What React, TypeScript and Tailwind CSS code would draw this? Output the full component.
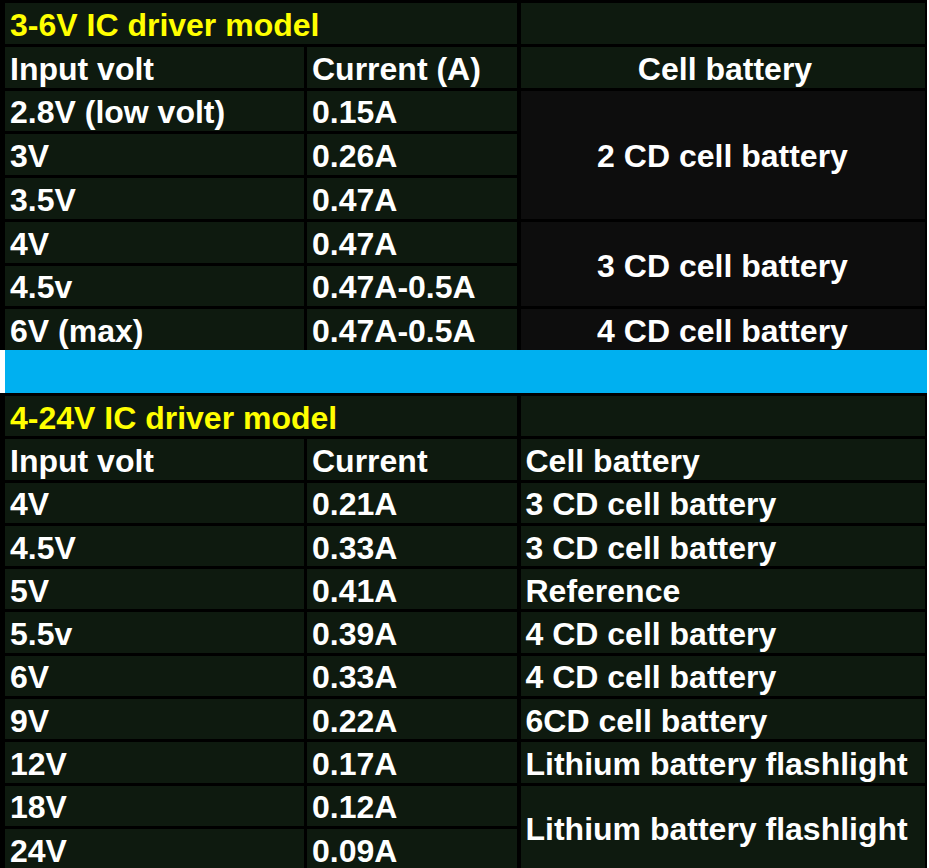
import { Fragment } from "react";

const cell = "bg-[#0e1a0f] flex items-center pl-[5px] pt-[3px] whitespace-nowrap";
const dark = "bg-[#0d0d0d] flex items-center justify-center pt-[3px] whitespace-nowrap";

const lowRows = [
  ["4V", "0.21A", "3 CD cell battery"],
  ["4.5V", "0.33A", "3 CD cell battery"],
  ["5V", "0.41A", "Reference"],
  ["5.5v", "0.39A", "4 CD cell battery"],
  ["6V", "0.33A", "4 CD cell battery"],
  ["9V", "0.22A", "6CD cell battery"],
  ["12V", "0.17A", "Lithium battery flashlight"],
];

export default function App() {
  return (
    <div
      className="w-[929px] h-[868px] bg-white overflow-hidden text-white font-bold text-[32px] leading-none"
      style={{ fontFamily: '"Liberation Sans", Arial, sans-serif' }}
    >
      <div className="w-[927px]">
        {/* 3-6V section */}
        <div className="bg-black pl-[5px] pr-[3px] pt-[3px]">
          <div className="grid grid-cols-[298.5px_210px_404px] auto-rows-[40.75px] gap-x-[3.5px] gap-y-[3px]">
            <div className={`${cell} col-span-2 text-[#ffff00]`}>3-6V IC driver model</div>
            <div className={cell} />

            <div className={cell}>Input volt</div>
            <div className={cell}>Current (A)</div>
            <div className={`${cell} justify-center pl-0`}>Cell battery</div>

            <div className={cell}>2.8V (low volt)</div>
            <div className={cell}>0.15A</div>
            <div className={`${dark} row-span-3`}>2 CD cell battery</div>
            <div className={cell}>3V</div>
            <div className={cell}>0.26A</div>
            <div className={cell}>3.5V</div>
            <div className={cell}>0.47A</div>

            <div className={cell}>4V</div>
            <div className={cell}>0.47A</div>
            <div className={`${dark} row-span-2`}>3 CD cell battery</div>
            <div className={cell}>4.5v</div>
            <div className={cell}>0.47A-0.5A</div>

            <div className={cell}>6V (max)</div>
            <div className={cell}>0.47A-0.5A</div>
            <div className={dark}>4 CD cell battery</div>
          </div>
        </div>

        <div className="ml-[5px] h-[43px] bg-[#00b0f0]" />

        {/* 4-24V section */}
        <div className="bg-black pl-[5px] pr-[3px] pt-[3px]">
          <div className="grid grid-cols-[298.5px_210px_404px] auto-rows-[40.3px] gap-x-[3.5px] gap-y-[3px]">
            <div className={`${cell} col-span-2 text-[#ffff00]`}>4-24V IC driver model</div>
            <div className={cell} />

            <div className={cell}>Input volt</div>
            <div className={cell}>Current</div>
            <div className={cell}>Cell battery</div>

            {lowRows.map(([v, a, b]) => (
              <Fragment key={v}>
                <div className={cell}>{v}</div>
                <div className={cell}>{a}</div>
                <div className={cell}>{b}</div>
              </Fragment>
            ))}

            <div className={cell}>18V</div>
            <div className={cell}>0.12A</div>
            <div className={`${cell} row-span-2`}>Lithium battery flashlight</div>
            <div className={cell}>24V</div>
            <div className={cell}>0.09A</div>
          </div>
        </div>
      </div>
    </div>
  );
}
